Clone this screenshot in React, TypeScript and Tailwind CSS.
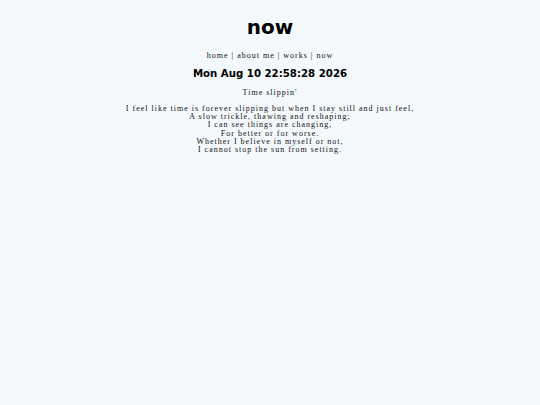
export default function App() {
  const poem = [
    'I feel like time is forever slipping but when I stay still and just feel,',
    'A slow trickle, thawing and reshaping;',
    'I can see things are changing,',
    'For better or for worse.',
    'Whether I believe in myself or not,',
    'I cannot stop the sun from setting.',
  ];

  return (
    <div className="min-h-screen bg-[#f4f9fd] text-center">
      <div className="flex flex-col items-center pt-[15px]">
        <h1 className="font-['DejaVu_Sans',sans-serif] text-[20px] font-bold leading-[24px] text-black">now</h1>

        <nav className="mt-[13px] font-['Liberation_Serif',serif] text-[8px] leading-[8px] tracking-[1px] text-[#111]">
          home | about me | works | now
        </nav>

        <h2 className="mt-[8px] font-['DejaVu_Sans',sans-serif] text-[10.2px] font-bold leading-[12px] text-black">
          Mon Aug 10 22:58:28 2026
        </h2>

        <p className="mt-[9px] font-['Liberation_Serif',serif] text-[8px] leading-[8px] tracking-[1px] text-[#111]">
          Time slippin'
        </p>

        <div className="mt-[8px] font-['Liberation_Serif',serif] text-[8px] leading-[8.2px] tracking-[1px] text-[#111]">
          {poem.map((line) => (
            <div key={line}>{line}</div>
          ))}
        </div>
      </div>
    </div>
  );
}
